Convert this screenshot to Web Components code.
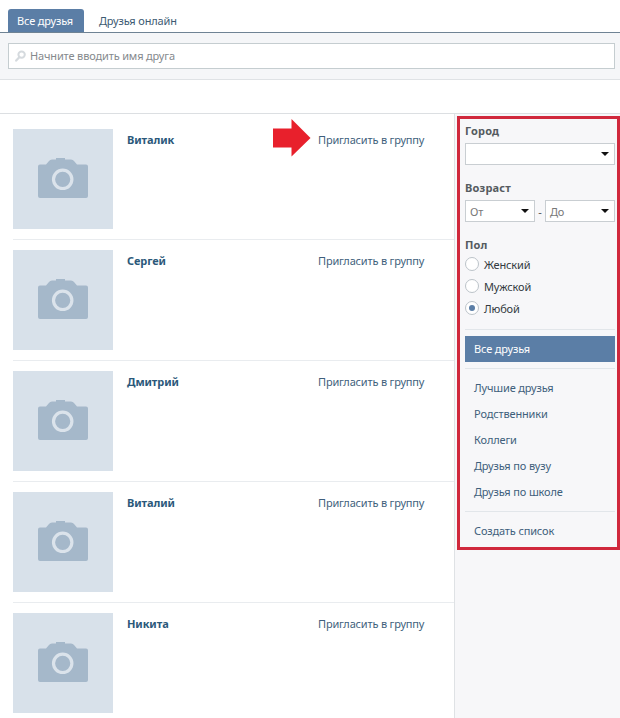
<!DOCTYPE html>
<html lang="ru"><head><meta charset="utf-8"><title>Друзья</title>
<style>
html,body{margin:0;padding:0;height:718px;overflow:hidden;background:#fff;font:11px "Noto Sans","Open Sans",sans-serif;color:#2b587a;letter-spacing:-.15px}
</style></head><body>
<friends-page></friends-page>
<script>
function el(name,css,html,init){
  customElements.define(name,class extends HTMLElement{
    constructor(){super();this.attachShadow({mode:'open'}).innerHTML='<style>'+css+'</style>'+html;}
    connectedCallback(){if(init)init(this);}
  });
}
el('tab-bar',`:host{display:flex;height:23px;padding:9px 0 0 8px;border-bottom:1px solid #6f8394}`,`<slot></slot>`);
el('tab-item',`:host{display:flex;align-items:center;box-sizing:border-box;width:76px;height:23px;padding-left:9px;border-radius:3px 3px 0 0;color:#3d5a72;font-size:11px}
:host([active]){background:#5b7ea6;color:#fff}
:host(:not([active])){width:100px;padding-left:15px}`,`<slot></slot>`);
el('search-bar',`:host{display:block;height:47px;box-sizing:border-box;padding:10px 5px 0 8px;background:#f5f6f8;border-bottom:1px solid #dfe2e5}
.box{height:26px;box-sizing:border-box;background:#fff;border:1px solid #c5cdd0;display:flex;align-items:center;padding:0 0 2px 6px;gap:4px;color:#85898d;font-size:11px}
svg{flex:none;margin-top:2px}`,`<div class="box"><svg width="11" height="12" viewBox="0 0 11 12"><circle cx="6.600" cy="4.600" r="3.200" fill="none" stroke="#d5dade" stroke-width="2"/><path d="M4.300 7.200 1.200 10.600" stroke="#d5dade" stroke-width="2.200" stroke-linecap="round"/></svg><slot></slot></div>`);
el('spacer-strip',`:host{display:block;height:34px;box-sizing:border-box;background:#fff;border-bottom:1px solid #dcdfe2}`,``);
el('cam-photo',`:host{display:flex;flex:none;width:100px;height:100px;background:#d8e1ea;align-items:center;justify-content:center}
svg{display:block;margin-top:-2px}`,`<svg width="50" height="40" viewBox="0 0 50 40"><path d="M2 6.500H8L11 3Q12 1.500 14 1.500H18V0H27V1.500H33Q35 1.500 36 3L39 6.500H48Q50 6.500 50 8.500V38Q50 40 48 40H2Q0 40 0 38V8.500Q0 6.500 2 6.500z" fill="#a5b8ca"/><circle cx="24.700" cy="21.300" r="9.200" fill="none" stroke="#dbe3eb" stroke-width="3.200"/></svg>`);
el('friend-row',`:host{display:flex;height:121px;box-sizing:border-box;margin-left:13px;padding-top:10px;border-bottom:1px solid #e9ecef}
.name{margin-left:14px;font:bold 11px "Noto Sans",sans-serif;color:#2b587a;line-height:14px;margin-top:4px;width:191px;flex:none;letter-spacing:-.1px}
.act{font-size:11px;color:#3f5f7c;line-height:14px;margin-top:4px;white-space:nowrap;letter-spacing:-.18px}
:host(:last-child){border-bottom:none}`,`<cam-photo></cam-photo><div class="name"><slot></slot></div><div class="act">Пригласить в группу</div>`);
el('red-arrow',`:host{position:absolute;left:273px;top:119px;display:block;width:38px;height:38px}
svg{display:block}`,`<svg width="38" height="38" viewBox="0 0 38 38"><path d="M0 9.500H18.500V0L37.500 19 18.500 37.500V28.500H0z" fill="#e8202c"/></svg>`);
el('filter-title',`:host{display:block;font:bold 11px "Noto Sans",sans-serif;color:#555b60;line-height:14px;letter-spacing:.2px}`,`<slot></slot>`);
el('drop-select',`:host{display:flex;box-sizing:border-box;height:22px;background:#fff;border:1px solid #c9ced2;align-items:center;justify-content:space-between;padding:0 5px 0 4px;color:#777;font-size:11px}
i{width:0;height:0;border:4px solid transparent;border-top:4px solid #111;border-bottom:0;display:block}`,`<span><slot></slot></span><i></i>`);
el('radio-opt',`:host{display:flex;align-items:center;height:22px;gap:5px;color:#333a40;font-size:11px}
b{box-sizing:border-box;width:14px;height:14px;border-radius:50%;border:1px solid #bcc3c9;background:#fff;display:flex;align-items:center;justify-content:center}
:host([checked]) b::after{content:"";width:6px;height:6px;border-radius:50%;background:#5b7ea6}`,`<b></b><slot></slot>`);
el('side-link',`:host{display:flex;align-items:center;height:26px;box-sizing:border-box;padding-left:9px;color:#3f5f7c;font-size:11px}
:host([active]){background:#5b7ea6;color:#fff;padding-bottom:2px}`,`<slot></slot>`);
el('side-sep',`:host{display:block;height:1px;background:#e2e6ea}`,``);
el('filter-panel',`:host{display:block;box-sizing:border-box;width:163px;height:434px;margin:2px 0 0 2px;border:3px solid #d0283c;padding:5px 2px 0 5px;background:#f7f7f9}
.age{display:flex;align-items:center;margin-top:5px}
.age drop-select{width:70px}
.age span{width:10px;text-align:center;color:#555}`,`<filter-title>Город</filter-title><drop-select style="margin-top:5px"></drop-select>
<filter-title style="margin-top:16px">Возраст</filter-title>
<div class="age"><drop-select>От</drop-select><span>-</span><drop-select>До</drop-select></div>
<filter-title style="margin-top:16px">Пол</filter-title>
<radio-opt style="margin-top:1px">Женский</radio-opt><radio-opt>Мужской</radio-opt><radio-opt checked>Любой</radio-opt>
<side-sep style="margin-top:10px"></side-sep>
<side-link active style="margin-top:6px">Все друзья</side-link>
<side-sep style="margin-top:6px"></side-sep>
<div style="height:5px"></div>
<side-link>Лучшие друзья</side-link><side-link>Родственники</side-link><side-link>Коллеги</side-link><side-link>Друзья по вузу</side-link><side-link>Друзья по школе</side-link>
<side-sep style="margin-top:7px"></side-sep>
<side-link style="margin-top:5px">Создать список</side-link>`);
el('friends-page',`:host{display:block;width:620px;height:718px;position:relative;overflow:hidden;background:#fff}
.main{display:flex;height:604px}
.list{width:454px;flex:none;box-sizing:border-box;overflow:hidden;padding-top:5px}
.side{flex:1;background:#f7f7f9;border-left:1px solid #dfe2e5;box-sizing:border-box;min-width:0}`,
`<tab-bar><tab-item active>Все друзья</tab-item><tab-item>Друзья онлайн</tab-item></tab-bar>
<search-bar>Начните вводить имя друга</search-bar>
<spacer-strip></spacer-strip>
<div class="main"><div class="list">
<friend-row>Виталик</friend-row><friend-row>Сергей</friend-row><friend-row>Дмитрий</friend-row><friend-row>Виталий</friend-row><friend-row>Никита</friend-row>
</div><div class="side"><filter-panel></filter-panel></div></div><red-arrow></red-arrow>`);
</script>
</body></html>
